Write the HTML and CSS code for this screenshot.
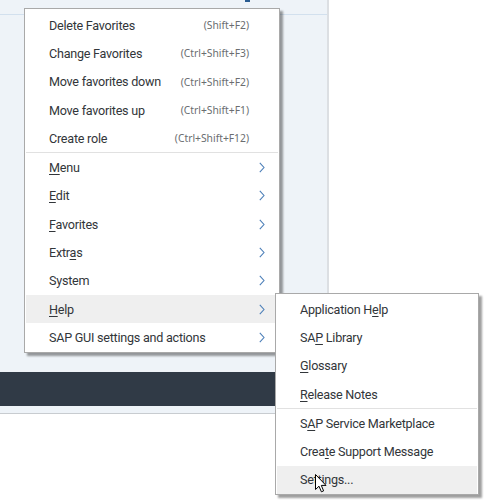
FILE: index.html
```html
<!DOCTYPE html>
<html>
<head>
<meta charset="utf-8">
<link rel="stylesheet" href="styles.css">
</head>
<body>
<div class="app">
  <div class="panel">
    <div class="panel-top"><span class="top-mark"></span></div>
    <div class="panel-body"></div>
    <div class="darkbar"></div>
    <div class="panel-foot"></div>
  </div>

  <div class="menu main-menu">
    <div class="item"><span class="label">Delete Favorites</span><span class="shortcut">(Shift+F2)</span></div>
    <div class="item"><span class="label">Change Favorites</span><span class="shortcut">(Ctrl+Shift+F3)</span></div>
    <div class="item"><span class="label">Move favorites down</span><span class="shortcut">(Ctrl+Shift+F2)</span></div>
    <div class="item"><span class="label">Move favorites up</span><span class="shortcut">(Ctrl+Shift+F1)</span></div>
    <div class="item"><span class="label">Create role</span><span class="shortcut">(Ctrl+Shift+F12)</span></div>
    <div class="sep"></div>
    <div class="item sub"><span class="label"><u>M</u>enu</span><svg class="chev" width="6" height="11" viewBox="0 0 6 11"><path d="M0.8 0.8 L5 5.5 L0.8 10.2" /></svg></div>
    <div class="item sub"><span class="label"><u>E</u>dit</span><svg class="chev" width="6" height="11" viewBox="0 0 6 11"><path d="M0.8 0.8 L5 5.5 L0.8 10.2" /></svg></div>
    <div class="item sub"><span class="label"><u>F</u>avorites</span><svg class="chev" width="6" height="11" viewBox="0 0 6 11"><path d="M0.8 0.8 L5 5.5 L0.8 10.2" /></svg></div>
    <div class="item sub"><span class="label">Extr<u>a</u>s</span><svg class="chev" width="6" height="11" viewBox="0 0 6 11"><path d="M0.8 0.8 L5 5.5 L0.8 10.2" /></svg></div>
    <div class="item sub"><span class="label">System</span><svg class="chev" width="6" height="11" viewBox="0 0 6 11"><path d="M0.8 0.8 L5 5.5 L0.8 10.2" /></svg></div>
    <div class="item sub active"><span class="label"><u>H</u>elp</span><svg class="chev" width="6" height="11" viewBox="0 0 6 11"><path d="M0.8 0.8 L5 5.5 L0.8 10.2" /></svg></div>
    <div class="item sub"><span class="label">SAP GUI settings and actions</span><svg class="chev" width="6" height="11" viewBox="0 0 6 11"><path d="M0.8 0.8 L5 5.5 L0.8 10.2" /></svg></div>
  </div>

  <div class="menu sub-menu">
    <div class="item"><span class="label">Application H<u>e</u>lp</span></div>
    <div class="item"><span class="label">SA<u>P</u> Library</span></div>
    <div class="item"><span class="label"><u>G</u>lossary</span></div>
    <div class="item"><span class="label"><u>R</u>elease Notes</span></div>
    <div class="sep"></div>
    <div class="item"><span class="label">S<u>A</u>P Service Marketplace</span></div>
    <div class="item"><span class="label">Crea<u>t</u>e Support Message</span></div>
    <div class="item active"><span class="label">Settings...</span></div>
  </div>

  <svg class="cursor" width="12" height="19" viewBox="0 0 12 19">
    <path d="M0.5 0.5 L0.5 15.5 L4 12.2 L6.4 17.8 L8.6 16.9 L6.3 11.4 L11 11.4 Z" fill="#fff" stroke="#000" stroke-width="1" stroke-linejoin="miter"/>
  </svg>
</div>
</body>
</html>
```

FILE: styles.css
```css
* { box-sizing: border-box; }
html, body { margin: 0; padding: 0; }
body {
  background: #ffffff;
  font-family: Roboto, "Noto Sans", "Liberation Sans", sans-serif;
  color: #32363a;
}
.app {
  position: relative;
  width: 486px;
  height: 504px;
  overflow: hidden;
}
.panel {
  width: 329px;
  height: 414px;
  display: flex;
  flex-direction: column;
  background: #eef3f8;
  border-right: 2px solid #dcdfe3;
  border-bottom: 1px solid #c8ccd0;
}
.panel-top {
  height: 15px;
  border-bottom: 1px solid #d2e0ee;
  display: flex;
  padding-left: 245px;
}
.top-mark {
  width: 5px;
  height: 2px;
  background: #2a5c91;
}
.panel-body { flex: 1; }
.darkbar {
  height: 34px;
  background: #303a46;
}
.panel-foot { height: 7px; }

.menu {
  position: absolute;
  background: #ffffff;
  border: 1px solid #a9a9a9;
  box-shadow: 3px 3px 2px rgba(0, 0, 0, 0.38);
  display: flex;
  flex-direction: column;
}
.main-menu {
  left: 24px;
  top: 8px;
  width: 256px;
  padding: 2px 1px 0 1px;
}
.sub-menu {
  left: 275px;
  top: 293px;
  width: 204px;
  padding: 1px 1px 0 1px;
}
.item {
  height: 28.3px;
  display: flex;
  align-items: center;
  font-size: 12.6px;
  letter-spacing: -0.25px;
  white-space: nowrap;
}
.main-menu .item { padding: 0 29px 0 23px; }
.main-menu .item.sub { padding-right: 13px; }
.sub-menu .item { padding: 0 10px 0 23px; }
.label { flex: 1; }
.item u {
  text-decoration-thickness: 1px;
  text-underline-offset: 2px;
}
.shortcut {
  font-size: 10.3px;
  letter-spacing: 0;
  color: #6a6d70;
  font-family: "Noto Sans", sans-serif;
}
.chev {
  fill: none;
  stroke: #4c7fb8;
  stroke-width: 1.1;
}
.item.active { background: #efefef; }
.sep {
  height: 1px;
  background: #e1e1e1;
  flex: none;
}
.cursor {
  position: absolute;
  left: 315px;
  top: 474px;
}
```
